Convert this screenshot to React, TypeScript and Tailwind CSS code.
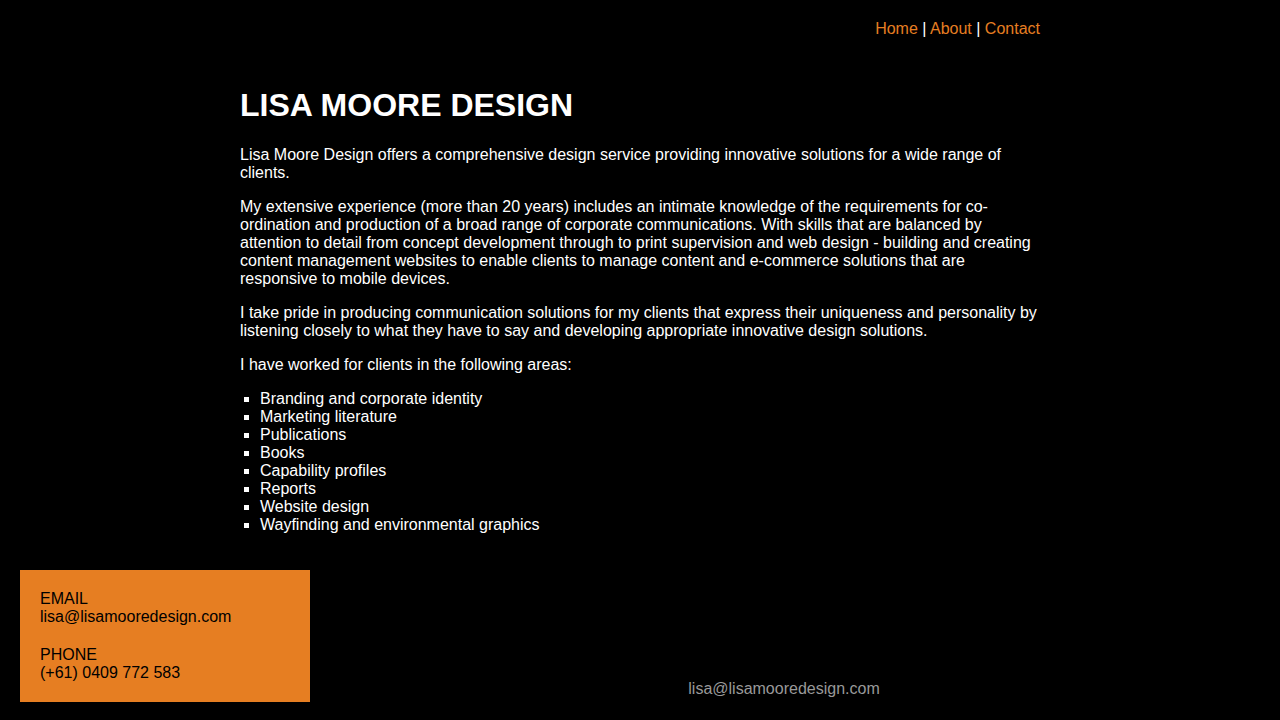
export default function App() {
  const items = [
    "Branding and corporate identity",
    "Marketing literature",
    "Publications",
    "Books",
    "Capability profiles",
    "Reports",
    "Website design",
    "Wayfinding and environmental graphics",
  ];
  return (
    <div className="min-h-[720px] w-full bg-black text-white font-['Liberation_Sans',Arial,sans-serif] text-[16px] leading-[18px]">
      <div className="mx-auto w-[800px] pt-[20px] text-right">
        <a className="text-[#e67e22]">Home</a> | <a className="text-[#e67e22]">About</a> |{" "}
        <a className="text-[#e67e22]">Contact</a>
      </div>
      <main className="mx-auto w-[800px] mt-[49px]">
        <h1 className="m-0 mb-[22px] text-[32px] leading-[37px] font-bold">LISA MOORE DESIGN</h1>
        <p className="mb-4">
          Lisa Moore Design offers a comprehensive design service providing innovative solutions for a wide range of clients.
        </p>
        <p className="mb-4">
          My extensive experience (more than 20 years) includes an intimate knowledge of the requirements for co-ordination and
          production of a broad range of corporate communications. With skills that are balanced by attention to detail from
          concept development through to print supervision and web design - building and creating content management websites to
          enable clients to manage content and e-commerce solutions that are responsive to mobile devices.
        </p>
        <p className="mb-4">
          I take pride in producing communication solutions for my clients that express their uniqueness and personality by
          listening closely to what they have to say and developing appropriate innovative design solutions.
        </p>
        <p className="mb-4">I have worked for clients in the following areas:</p>
        <ul className="list-[square] pl-5">
          {items.map((i) => (
            <li key={i}>{i}</li>
          ))}
        </ul>
      </main>
      <div className="mt-[36px] flex items-end">
        <div className="ml-5 w-[290px] bg-[#e67e22] p-5 text-black">
          <p>EMAIL</p>
          <p>lisa@lisamooredesign.com</p>
          <p className="mt-5">PHONE</p>
          <p>(+61) 0409 772 583</p>
        </div>
        <div className="flex-1 pr-[22px] pb-[4px] text-center text-[#999999]">lisa@lisamooredesign.com</div>
      </div>
    </div>
  );
}
